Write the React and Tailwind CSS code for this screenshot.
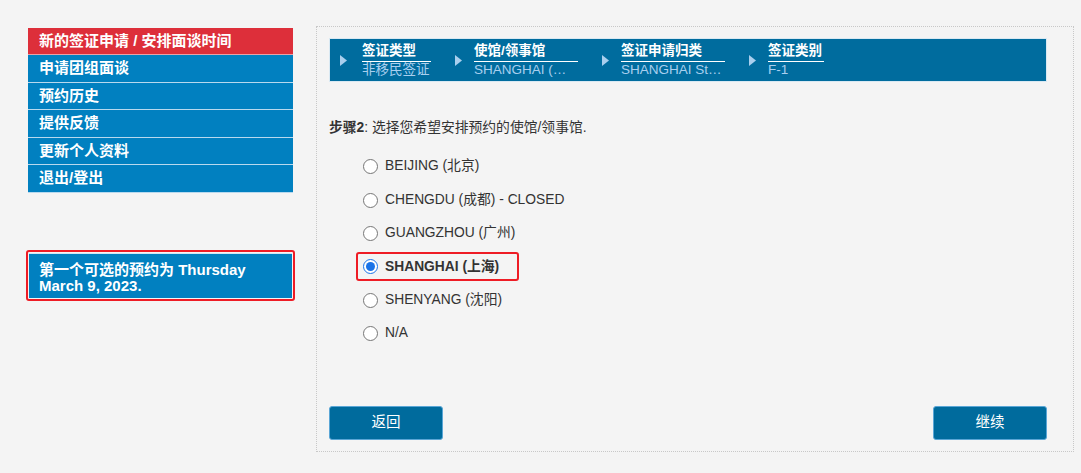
import React from "react";

const font = { fontFamily: '"Liberation Sans", Arial, "Noto Sans CJK SC", sans-serif' };

const menu = ["申请团组面谈", "预约历史", "提供反馈", "更新个人资料", "退出/登出"];

const steps = [
  { label: "签证类型", value: "非移民签证", w: "w-[69px]" },
  { label: "使馆/领事馆", value: "SHANGHAI (…", w: "w-[104px]" },
  { label: "签证申请归类", value: "SHANGHAI St…", w: "w-[104px]" },
  { label: "签证类别", value: "F-1", w: "w-[56px]" },
];

const posts = [
  "BEIJING (北京)",
  "CHENGDU (成都) - CLOSED",
  "GUANGZHOU (广州)",
  "SHANGHAI (上海)",
  "SHENYANG (沈阳)",
  "N/A",
];

function Arrow() {
  return (
    <svg width="7" height="11" viewBox="0 0 7 11" className="shrink-0">
      <path d="M0 0 L7 5.5 L0 11 Z" fill="#a9cfee" />
    </svg>
  );
}

function Radio({ checked }) {
  return (
    <span
      className={`w-[15px] h-[15px] rounded-full border-[1.5px] flex items-center justify-center bg-white shrink-0 ${
        checked ? "border-[#1a73e8]" : "border-[#767676]"
      }`}
    >
      {checked && <span className="w-[9px] h-[9px] rounded-full bg-[#1a73e8]" />}
    </span>
  );
}

export default function App() {
  const [selected, setSelected] = React.useState(3);

  return (
    <div className="w-[1081px] h-[473px] bg-[#f4f4f4] flex items-start pt-[26px] pl-[28px]" style={font}>
      {/* Left menu */}
      <div className="w-[265px] mt-[2px] flex flex-col">
        <div className="h-[27px] bg-[#dd2f3a] border-b border-[#e9a0a6] text-white font-bold text-[15px] pl-[11px] flex items-center">
          新的签证申请 / 安排面谈时间
        </div>
        {menu.map((m) => (
          <div
            key={m}
            className="h-[27.5px] bg-[#0180c0] border-b border-[#b9d9ee] text-white font-bold text-[15px] pl-[11px] flex items-center"
          >
            {m}
          </div>
        ))}

        <div className="mt-[57px] -mx-[2px] border-2 border-[#ee1c25] rounded-[3px] p-px">
          <div className="bg-[#0180c0] border-t border-[#cfe6f4] h-[45px] pl-[10px] pt-[8px] text-white font-bold text-[15px] leading-[16px]">
            第一个可选的预约为 Thursday
            <br />
            March 9, 2023.
          </div>
        </div>
      </div>

      {/* Main panel */}
      <div className="ml-[23px] w-[758px] h-[426px] border border-dotted border-[#c8c8c8] pt-[11px] pl-[12px] pr-[26px] flex flex-col">
        <div className="h-[44px] bg-[#006c9e] border border-[#d9e9f3] flex items-center pl-[10px]">
          {steps.map((s, i) => (
            <div key={s.label} className={`flex items-center ${i === 0 ? "" : "ml-[24px]"}`}>
              <Arrow />
              <div className={`${i === 0 ? "ml-[15px]" : "ml-[12px]"} ${s.w} flex flex-col`}>
                <div className="text-white font-bold text-[13.5px] leading-[16px] border-b border-white pb-[2px] whitespace-nowrap">
                  {s.label}
                </div>
                <div className="text-[#a9cfee] text-[13.5px] leading-[16px] whitespace-nowrap">{s.value}</div>
              </div>
            </div>
          ))}
        </div>

        <div className="mt-[38px] text-[13.8px] text-[#333] leading-[16px]">
          <span className="font-bold">步骤2</span>: 选择您希望安排预约的使馆/领事馆.
        </div>

        <div className="mt-[14px] flex flex-col pl-[34px]">
          {posts.map((p, i) => {
            const on = i === selected;
            return (
              <div key={p} className="h-[33.4px] flex items-center">
                <label
                  onClick={() => setSelected(i)}
                  className={`flex items-center gap-[7px] cursor-pointer rounded-[3px] ${
                    on ? "border-2 border-[#ee1c25] -ml-[7px] pl-[5px] pr-[18px] h-[29px] -my-[2px]" : ""
                  }`}
                >
                  <Radio checked={on} />
                  <span className={`text-[13.8px] text-[#333] ${on ? "font-bold" : ""}`}>{p}</span>
                </label>
              </div>
            );
          })}
        </div>

        <div className="mt-auto mb-[11px] flex justify-between">
          <button className="w-[114px] h-[34px] bg-[#006b9d] border border-[#5aa6d6] rounded-[3px] text-white text-[14.5px]">
            返回
          </button>
          <button className="w-[114px] h-[34px] bg-[#006b9d] border border-[#5aa6d6] rounded-[3px] text-white text-[14.5px]">
            继续
          </button>
        </div>
      </div>
    </div>
  );
}
